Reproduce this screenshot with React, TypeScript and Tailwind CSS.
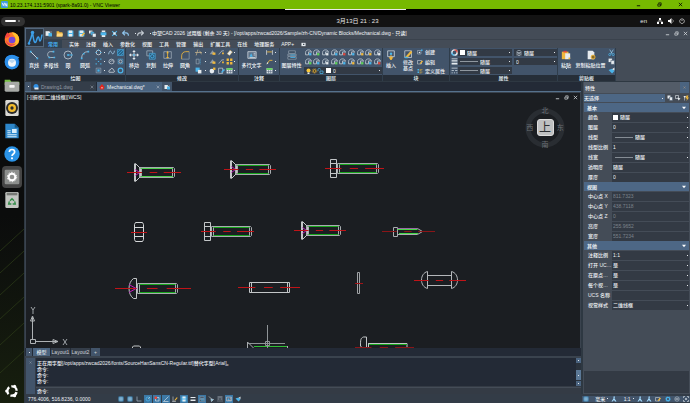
import React from 'react'
import type { ReactNode } from 'react'

const styles = {
  label: "whitespace-nowrap text-[5px] leading-[6px] font-medium text-[#f0f3f6]",
  combo:
    "w-full min-w-0 appearance-none bg-transparent text-[5px] leading-[6px] font-medium text-[#f0f3f6] outline-none",
  comboBox: "flex h-[7px] items-center gap-[2px] bg-[#323a45] px-[2px]",
  section:
    "flex h-[9px] w-full items-center justify-between bg-[#4d6785] px-[3px] text-[5px] leading-[6px] font-bold text-[#e8edf2]",
  winBtn: "flex h-[8px] w-[9px] items-center justify-center text-[#d5d9dd]",
};

const W = "#e6ebef";
const B = "#4bb4ea";
const Y = "#f0b83c";
const G = "#5fd05a";
const R = "#e0483e";

// every glyph is drawn on a 12 x 12 grid
const glyphs: Record<string, ReactNode> = {
  newDoc: <><path d="M1 2h10v8H1z" fill={W} /><path d="M6 5h6v6H6z" fill={B} /><path d="M7 2l4 4V2z" fill="#3d4652" /></>,
  open: <><path d="M1 2h4l1 2h5v7H1z" fill={Y} /><path d="M2 6h10l-1 5H1z" fill="#ffd680" /></>,
  save: <><path d="M1 1h10v10H1z" fill={B} /><path d="M3 1h6v4H3zM3 7h6v4H3z" fill={W} /></>,
  saveAs: <><path d="M1 1h10v10H1z" fill={B} /><path d="M3 1h6v4H3zM3 7h6v4H3z" fill={W} /><path d="M6 9l4-5 2 2-5 5z" fill={Y} /></>,
  copies: <><path d="M0 1h6v5H0z" fill={W} /><path d="M3 3h6v6H3z" fill={B} stroke="#3d4652" strokeWidth=".6" /><path d="M6 6h6v6H6z" fill={W} stroke="#3d4652" strokeWidth=".6" /></>,
  print: <><path d="M3 1h6v3H3zM3 8h6v4H3z" fill={W} /><path d="M1 4h10v5H1z" fill={B} /></>,
  plot: <><path d="M2 2l8 8M10 2l-8 8" stroke={B} strokeWidth="2" /><path d="M4 4h4v4H4z" fill={W} /></>,
  undo: <path d="M2 5h5c3 0 4 2 4 5M5 1L1 5l4 4" fill="none" stroke="#8ec3ea" strokeWidth="2" />,
  redo: <path d="M10 5H5c-3 0-4 2-4 5M7 1l4 4-4 4" fill="none" stroke="#c3cad1" strokeWidth="2" />,
  line: <><path d="M2 2l8 8" stroke={W} /><path d="M1 1h2v2H1zM9 9h2v2H9z" fill={B} /></>,
  pline: <><path d="M9 2H5C1 2 1 9 5 9h5" fill="none" stroke="#b9c4cf" /><path d="M8 1h2v2H8zM9 8h2v2H9zM3 8h2v2H3z" fill={B} /></>,
  circle: <><circle cx="6" cy="6" r="4.8" fill="none" stroke="#c8d1da" strokeWidth=".9" /><path d="M6 6h4" stroke={B} /><circle cx="6" cy="6" r="1.1" fill={B} /><circle cx="10.5" cy="6" r="1" fill={B} /></>,
  arc: <><path d="M2 10C2 5 5 2 10 2" fill="none" stroke="#c8d1da" /><path d="M1 9h2v2H1zM9 1h2v2H9zM3.500 3.500h2v2h-2z" fill={B} /></>,
  ellipse: <><circle cx="6" cy="6" r="4" fill="none" stroke={W} strokeWidth="1.200" /><path d="M1 5h2v2H1zM9 5h2v2H9zM5 1h2v2H5z" fill={B} /></>,
  spline: <path d="M1 9C3 1 5 3 6 6s4 4 5-3" fill="none" stroke="#9fc6e2" strokeWidth="1.500" />,
  hatch: <><path d="M1 1h10v10H1z" fill="#27648a" stroke={B} /><path d="M1 11L11 1M1 6l5-5M6 11l5-5" stroke={B} /></>,
  points: <path d="M1 1h2v2H1zM9 1h2v2H9zM5 5h2v2H5zM1 9h2v2H1zM9 9h2v2H9z" fill={B} />,
  helix: <><ellipse cx="6" cy="6" rx="4.500" ry="4" fill="none" stroke={W} /><path d="M2 8c3-4 6-4 8-2" fill="none" stroke={W} /></>,
  region: <><path d="M2 2h8v8H2z" fill="none" stroke={B} /><circle cx="6" cy="6" r="2.500" fill="none" stroke={W} /></>,
  rect: <><path d="M2 2h8v8H2z" fill="none" stroke="#9fb2c4" /><path d="M4 4h4v4H4z" fill={B} /></>,
  cloud: <path d="M2 9c-2-3 1-4 2-4 1-4 5-3 5 0 3 1 2 4 1 4z" fill="none" stroke={W} strokeWidth="1.200" />,
  donut: <circle cx="6" cy="6" r="4" fill="none" stroke={B} strokeWidth="2" />,
  move: <><path d="M6 1v10M1 6h10" stroke={W} /><path d="M6 0l2 2.500H4zM6 12l2-2.500H4zM0 6l2.500-2v4zM12 6L9.500 4v4z" fill={W} /><path d="M5 5h2v2H5z" fill={B} /></>,
  copy: <><path d="M1 1h7v6H1z" fill="none" stroke="#97a8b8" /><path d="M4 4h7v7H4z" fill="#2c5878" stroke={B} strokeWidth=".8" /><circle cx="7.500" cy="7.500" r="2" fill="none" stroke={B} /></>,
  stretch: <><path d="M1 2h9v8H1z" fill="none" stroke="#a9b5c1" strokeWidth=".8" /><path d="M5.500 3v7M4 9h3" stroke={Y} /><path d="M5.500 1l1.500 3H4z" fill={Y} /></>,
  fillet: <><path d="M2 11V7c0-3 2-5 5-5h4" fill="none" stroke={Y} /><path d="M2 11h9V2" fill="none" stroke="#9fb0c0" strokeWidth=".7" /></>,
  trim: <path d="M2 11l3-10M0 6h12M8 3l3 6" stroke="#cdb98f" strokeWidth="1.200" />,
  mirror: <><path d="M1 9h10L6 2z" fill="#8c98a5" /><path d="M6 6h5v4H6z" fill={Y} /></>,
  rotate: <><path d="M1 9c4-1 2-6 9-6" stroke={W} fill="none" /><path d="M7 6h3v3H7z" fill={Y} /></>,
  erase: <path d="M2 8l5-6 4 3-5 6z" fill={W} stroke={Y} strokeWidth=".6" />,
  offset: <><path d="M2 2h5v8H2z" fill="none" stroke="#a9b5c1" /><path d="M9 1v10" stroke={B} strokeDasharray="2 1" /></>,
  array: <path d="M1 1h4v4H1zM7 1h4v4H7zM1 7h4v4H1zM7 7h4v4H7z" fill={Y} />,
  scale: <><path d="M1 1h7v7H1z" fill={B} /><path d="M5 5h6v6H5z" fill={W} /></>,
  sphere: <><circle cx="5" cy="7" r="4" fill={W} /><path d="M7 1h4v4H7z" fill={Y} /></>,
  edit: <><path d="M1 2h7v9H1z" fill="none" stroke={W} /><path d="M5 9l5-6 2 2-5 5z" fill={B} /></>,
  mtext: <><path d="M1 2h10v8H1z" fill="#60748a" stroke={W} strokeWidth=".8" /><path d="M3 8l2-4 2 4z" fill={B} /><path d="M8 4h2M8 6h2M3 9h7" stroke={W} strokeWidth=".8" /></>,
  dim: <><path d="M1 2v8M11 2v8" stroke={W} strokeWidth="1.200" /><path d="M2 5h8" stroke={Y} strokeWidth="1.500" /></>,
  leader: <><path d="M2 10l4-6h5" stroke={Y} fill="none" strokeWidth="1.500" /><path d="M1 11l1-4 2 2z" fill={W} /></>,
  table: <><path d="M1 2h10v9H1z" fill={W} /><path d="M1 2h10v3H1z" fill={G} /><path d="M4.500 5v6M8 5v6M1 8h10" stroke="#47596e" /></>,
  layers: <><path d="M2 1h8v3H2zM1 5h10v2H1zM1 8h10v3H1z" fill="#35485c" stroke="#a8b5c2" strokeWidth=".7" /><path d="M4 6h6M4 9h6" stroke={B} /></>,
  insert: <><path d="M2 1h8v7H2z" fill="none" stroke="#c9d2da" /><circle cx="6" cy="4.500" r="1.500" fill={B} /><path d="M6 6v5M4 9l2 3 2-3z" stroke={Y} fill={Y} /></>,
  base: <><path d="M1 1h9v9H1z" fill="none" stroke="#c9d2da" /><path d="M2 9l7-8 2 2-7 8z" fill={Y} /><path d="M1 9h4v2H1z" fill={B} /></>,
  create: <><path d="M1 3h7v7H1z" fill="none" stroke="#b9c5d0" /><path d="M8 1h3v3H8z" fill={B} /><circle cx="5" cy="7" r="1.500" fill={W} /></>,
  editBlk: <><path d="M1 3h8v7H1z" fill="none" stroke={W} /><path d="M5 9l5-6 2 2-5 5z" fill={Y} /></>,
  attr: <><path d="M1 2h3v3H1zM1 7h3v3H1z" fill={B} /><path d="M5 3h6M5 5h4M5 8h6M5 10h4" stroke={Y} /></>,
  wheel: <><circle cx="6" cy="6" r="4.500" fill="none" stroke={W} strokeWidth="2.500" /><path d="M6 1.500A4.500 4.500 0 0 1 10.500 6" stroke={R} strokeWidth="2" fill="none" /><path d="M1.500 6A4.500 4.500 0 0 0 6 10.500" stroke={B} strokeWidth="2" fill="none" /></>,
  widths: <path d="M1 1h10v1H1zM1 4h10v2H1zM1 8h10v3H1z" fill={W} />,
  types: <path d="M1 2h10M1 6h4M7 6h4M1 10h2M5 10h2M9 10h2" stroke="#bcc7d1" strokeWidth="1.500" />,
  paste: <><path d="M1 2h8v9H1z" fill={Y} /><path d="M3 1h4v2H3z" fill={R} /><path d="M5 4h6v7H5z" fill={W} /><path d="M9 9h2v2H9z" fill={Y} /></>,
  pastePos: <><path d="M2 1h6l2 2v8H2z" fill={W} /><circle cx="8.500" cy="8.500" r="2.400" fill="#8a6a22" stroke={Y} /></>,
  cut: <><path d="M3 1l4 7M9 1L5 8" stroke="#9bd2f2" strokeWidth="1.200" /><circle cx="3" cy="9.500" r="1.800" fill="none" stroke={B} strokeWidth="1.300" /><circle cx="9" cy="9.500" r="1.800" fill="none" stroke={B} strokeWidth="1.300" /></>,
  clip: <><path d="M1 1h6v6H1z" fill={W} /><path d="M5 4h6v7H5z" fill={W} stroke="#42546a" /></>,
  brush: <><path d="M1 5l6-2 4 4-4 4z" fill={B} /><path d="M7 4l4-3v5z" fill={W} /></>,
  play: <><path d="M1 2h10v8H1z" fill={W} /><path d="M5 4h3v3H5z" fill="#323a45" /></>,
  grid: <><path d="M1 1h10v10H1z" fill="#2f7fb4" /><path d="M4.300 1v10M7.700 1v10M1 4.300h10M1 7.700h10" stroke={W} strokeWidth=".8" /></>,
  ortho: <path d="M2 1v9h9" stroke="#9fb0c0" fill="none" strokeWidth="1.500" />,
  polar: <><circle cx="6" cy="6" r="4" fill="none" stroke={B} strokeWidth="1.500" /><path d="M6 6l4-4" stroke={W} /></>,
  osnap: <><path d="M3 3h7v7H3z" fill="none" stroke={W} strokeWidth="1.200" /><path d="M1 1h5v5H1z" fill={R} /></>,
  track: <path d="M1 11L11 1M1 11h10" stroke={W} strokeWidth="1.200" />,
  dyn: <><path d="M1 10h6v1H1zM2 1v8" stroke={W} /><path d="M5 8l5-6 1 2-4 5z" fill={Y} /></>,
  lweight: <path d="M1 2h10v2H1zM1 7h10v3H1z" fill={W} />,
  cursor: <path d="M2 1l5 5M6 6l5 1-4 4z" stroke={W} fill={B} strokeWidth="1.200" />,
  figure: <path d="M5 1h3l-1 4 4 6H8L6 8l-3 3H1l4-6z" fill="#a5dcff" />,
  gear: <><circle cx="6" cy="6" r="3.500" fill="none" stroke={B} strokeWidth="2.500" /><circle cx="6" cy="6" r="5.300" fill="none" stroke={B} strokeDasharray="1.500 1.800" /></>,
  lock: <><circle cx="6" cy="6" r="4.500" fill="none" stroke="#ccd4db" /><path d="M3 5h6M3 7h6" stroke="#ccd4db" /></>,
  full: <path d="M1 4V1h3M8 1h3v3M11 8v3H8M4 11H1V8M4 4l4 4M8 4L4 8" fill="none" stroke={W} strokeWidth="1.200" />,
  select: <><path d="M1 1h6v6H1z" fill="none" stroke={W} strokeWidth="1.200" /><path d="M5 5l6 2-4 4z" fill={W} /></>,
  filter: <><path d="M1 2h5l-2 4v5H3V6z" fill={W} /><path d="M7 1L5 7h3l-1 5 5-7H9l2-4z" fill={Y} /></>,
  printer: <path d="M2 11V3c0-3 8-3 8 0v8M2 5h8M4 7h4v4H4z" fill="none" stroke="#b6c1cb" strokeWidth="1.300" />,
  min: <path d="M2 9h8" stroke="currentColor" strokeWidth="2" />,
  restore: <><path d="M2 5h6v5H2z" fill="none" stroke="currentColor" strokeWidth="1.600" /><path d="M4 4V2h6v6H8" fill="none" stroke="currentColor" strokeWidth="1.600" /></>,
  close: <path d="M2 2l8 8M10 2l-8 8" stroke="currentColor" strokeWidth="1.800" />,
};

const Glyph = ({ name, className = "size-[6px]" }: { name: string; className?: string }) => (
  <svg viewBox="0 0 12 12" className={`shrink-0 ${className}`} aria-hidden="true">{glyphs[name]}</svg>
);

const Dot = () => <span className="size-px shrink-0 bg-[#e4e8ec]" />;

const layerTints = [B, G, W, B, R, B, Y, Y, W, G, B, W, G, B, Y, G, B, R];

const LayerIcon = ({ tint }: { tint: string }) => (
  <svg viewBox="0 0 12 12" className="size-[7px]" aria-hidden="true">
    <path d="M1 6c0-6 10-6 10 0M1 6v4h5V5h5" fill="none" stroke="#b6c1cb" strokeWidth="1.600" />
    <path d="M7 7h4v4H7z" fill={tint} />
  </svg>
);

const BigTool = ({ icon, label, more = true, className = "w-[16px]" }: { icon: string; label: string; more?: boolean; className?: string }) => (
  <button type="button" className={`flex shrink-0 flex-col items-center pt-[2px] ${className}`}>
    <Glyph name={icon} className="size-[10px]" />
    <span className={`mt-[2px] ${styles.label}`}>{label}</span>
    {more && <Dot />}
  </button>
);

const ToolGrid = ({ rows, className }: { rows: string[][]; className: string }) => (
  <div className={`grid content-between items-center justify-items-center py-[1px] ${className}`}>
    {rows.flat().map((name, i) =>
      name === "." ? <Dot key={i} /> : (
        <button type="button" key={i} aria-label={name}><Glyph name={name} className="block size-[7px]" /></button>
      )
    )}
  </div>
);

const Panel = ({ title, className, children }: { title: string; className: string; children: ReactNode }) => (
  <section className={`flex shrink-0 flex-col border-r border-[#2f3d4b] bg-[#42546a] ${className}`}>
    <div className="flex h-[27px] gap-px">{children}</div>
    <h2 className="flex h-[6px] items-center justify-center bg-[#262e38] text-[5px] leading-[6px] font-bold text-[#dde2e7]">{title}</h2>
  </section>
);

const Combo = ({ label, value, line, swatch, className = "" }: { label: string; value: string; line?: boolean; swatch?: boolean; className?: string }) => (
  <div className={`${styles.comboBox} ${className}`}>
    {swatch && <span className="size-[5px] shrink-0 bg-white" />}
    {line && <span className="h-px w-[18px] shrink-0 bg-[#8f979f]" />}
    <select className={styles.combo} aria-label={label}><option>{value}</option></select>
    <Dot />
  </div>
);

const Ribbon = () => (
  <div className="flex h-[33px] overflow-hidden bg-[#444c57] pl-px">
    <Panel title="绘图" className="w-[100px]">
      <BigTool icon="line" label="直线" />
      <BigTool icon="pline" label="多段线" />
      <BigTool icon="circle" label="圆" />
      <BigTool icon="arc" label="圆弧" />
      <ToolGrid className="flex-1 grid-cols-[8px_4px_10px_8px]" rows={[["ellipse", ".", "spline", "hatch"], ["points", ".", "helix", "region"], ["rect", ".", "cloud", "donut"]]} />
    </Panel>
    <Panel title="修改" className="w-[113px]">
      <BigTool icon="move" label="移动" />
      <BigTool icon="copy" label="复制" />
      <BigTool icon="stretch" label="拉伸" />
      <BigTool icon="fillet" label="圆角" />
      <ToolGrid className="flex-1 grid-cols-[9px_4px_10px_8px_8px_3px]" rows={[["trim", ".", "mirror", "rotate", "erase", "."], ["offset", ".", "mirror", "rotate", "array", "."], ["scale", ".", "sphere", "edit", "table", "."]]} />
    </Panel>
    <Panel title="注释" className="w-[41px]">
      <BigTool icon="mtext" label="多行文字" className="w-[25px]" />
      <ToolGrid className="flex-1 grid-cols-[9px_3px]" rows={[["dim", "."], ["leader", "."], ["table", "."]]} />
    </Panel>
    <Panel title="图层" className="w-[103px]">
      <BigTool icon="layers" label="图层特性" more={false} className="w-[23px]" />
      <div className="flex flex-1 flex-col gap-[2px] pt-[1px]">
        <div className="grid grid-cols-9 justify-items-center gap-y-[2px]">
          {layerTints.map((tint, i) => <button type="button" key={i} aria-label={`layer ${i + 1}`}><LayerIcon tint={tint} /></button>)}
        </div>
        <div className={styles.comboBox}>
          <svg viewBox="0 0 36 12" className="h-[6px] w-[18px] shrink-0" aria-hidden="true">
            <circle cx="5" cy="5" r="4" fill="#f8c83a" /><path d="M3 9h4v3H3z" fill={W} />
            <circle cx="17" cy="6" r="3" fill="#594a22" stroke={Y} strokeWidth="1.500" /><circle cx="17" cy="6" r="5" fill="none" stroke={Y} strokeDasharray="1.500 2" />
            <path d="M24 6V3c0-3 5-3 5 0M28 6h6v5h-6z" fill="none" stroke={B} strokeWidth="1.500" />
          </svg>
          <span className="size-[5px] shrink-0 bg-white" />
          <select className={styles.combo} aria-label="图层"><option>0</option></select>
          <Dot />
        </div>
      </div>
    </Panel>
    <Panel title="块" className="w-[67px]">
      <BigTool icon="insert" label="插入" more={false} />
      <button type="button" className="flex w-[16px] shrink-0 flex-col items-center pt-[2px]">
        <Glyph name="base" className="size-[9px]" />
        <span className={styles.label}>修改<br />基点</span>
      </button>
      <div className="flex flex-1 flex-col justify-between py-[1px]">
        {[["create", "创建"], ["editBlk", "编辑"], ["attr", "定义属性"]].map(([icon, label]) => (
          <button type="button" key={label} className="flex items-center gap-[2px]"><Glyph name={icon} /><span className={styles.label}>{label}</span></button>
        ))}
      </div>
    </Panel>
    <Panel title="属性" className="w-[108px]">
      <ToolGrid className="w-[7px] pl-px" rows={[["wheel"], ["widths"], ["types"]]} />
      <div className="flex w-[54px] flex-col justify-between py-px">
        <Combo label="颜色" value="随层" swatch />
        <Combo label="线宽" value="随层" line />
        <Combo label="线型" value="随层" line />
      </div>
      <div className="flex flex-1 flex-col gap-[2px] py-px pl-px">
        <div className={styles.comboBox}>
          <Glyph name="printer" />
          <select className={styles.combo} aria-label="打印样式"><option>随层</option></select>
          <Dot />
        </div>
        <Combo label="透明度" value="0" />
      </div>
    </Panel>
    <Panel title="剪贴板" className="w-[58px]">
      <BigTool icon="paste" label="粘贴" />
      <BigTool icon="pastePos" label="复制粘贴位置" more={false} className="w-[31px]" />
      <ToolGrid className="flex-1" rows={[["cut"], ["clip"], ["brush"]]} />
    </Panel>
  </div>
);

const menus = ["实体", "注释", "插入", "参数化", "视图", "工具", "管理", "输出", "扩展工具", "在线", "地理服务", "APP+"];
const quick = ["newDoc", "open", "save", "saveAs", "copies", "print", "plot", "undo", ".", "redo", "."];

const AppHeader = () => (
  <header className="flex h-[21px] bg-[#444c57]">
    <button type="button" aria-label="ZWCAD" className="my-px flex w-[19px] shrink-0 items-center justify-center border border-[#53677d] bg-[#2a3440]">
      <svg viewBox="0 0 32 32" className="size-[16px]" aria-hidden="true">
        <path d="M3 28C6 22 9 14 11 5c2 11 2 18 5 20 3 1 4-12 7-11 2 1 1 8 3 8s3-7 4-13" fill="none" stroke="#3d9fe8" strokeWidth="3" />
        <circle cx="11" cy="5" r="3.500" fill="#3d9fe8" /><circle cx="4" cy="27" r="2.500" fill="#3d9fe8" />
      </svg>
    </button>
    <div className="flex min-w-0 flex-1 flex-col">
      <div className="flex h-[12px] items-center pl-px">
        {quick.map((name, i) =>
          name === "." ? <span key={i} className="flex w-[4px] shrink-0 justify-center"><Dot /></span> : (
            <button type="button" key={i} aria-label={name} className="flex w-[11px] shrink-0 justify-start"><Glyph name={name} className="size-[7px]" /></button>
          )
        )}
        <h1 className={`flex-1 overflow-hidden ${styles.label}`}>中望CAD 2026 试用版 (剩余 30 天) - [/opt/apps/zwcad2026/Sample/zh-CN/Dynamic Blocks/Mechanical.dwg - 只读]</h1>
        <WindowButtons />
      </div>
      <nav className="flex h-[9px] items-center gap-[7px] border-t border-[#3a424c]">
        <button type="button" className="h-full bg-[#33414f] px-[4px] text-[5px] leading-[6px] font-bold text-[#45aef0]">常用</button>
        {menus.map((m) => <button type="button" key={m} className={styles.label}>{m}</button>)}
        <Glyph name="play" className="size-[5px]" />
      </nav>
    </div>
  </header>
);

const WindowButtons = () => (
  <div className="flex shrink-0">
    {["min", "restore", "close"].map((n) => (
      <button type="button" key={n} aria-label={n} className={styles.winBtn}><Glyph name={n} className="size-[5px]" /></button>
    ))}
  </div>
);

// dashed axis: solid at both ends, short dash in the middle
const Axis = ({ x1, x2, y, dim }: { x1: number; x2: number; y: number; dim?: boolean }) => {
  const w = x2 - x1;
  return <path d={`M${x1} ${y}h${w * 0.28}m${w * 0.14} 0h${w * 0.14}m${w * 0.12} 0H${x2}`} stroke={dim ? "#8a1518" : "#c01418"} />;
};

const Shaft = ({ x, y, w, h = 10, green = "#17a51c" }: { x: number; y: number; w: number; h?: number; green?: string }) => (
  <>
    <path d={`M${x} ${y}h${w - 1}l1 1v${h - 2}l-1 1h${1 - w}zM${x + 2} ${y}v${h}M${x + w - 2} ${y}v${h}`} stroke="#a9adb0" />
    <path d={`M${x + 2} ${y + 1}h${w - 4}M${x + 2} ${y + h - 1}h${w - 4}`} stroke={green} />
  </>
);

const Countersunk = ({ x, y, w }: { x: number; y: number; w: number }) => (
  <>
    <Shaft x={x + 5} y={y - 5} w={w} />
    <path d={`M${x} ${y - 9}v18M${x + 1} ${y - 9}l5 5v8l-5 5z`} stroke="#c3c6c8" />
    <path d={`M${x + 1} ${y - 3}l4 3l-4 3M${x + 1} ${y}h5`} stroke="#c01ac0" />
  </>
);

const Hex = ({ x, y, w }: { x: number; y: number; w: number }) => (
  <>
    <Shaft x={x + 7} y={y - 5} w={w} />
    <path d={`M${x} ${y - 9}h6v18h-6zM${x} ${y - 5}h6M${x} ${y + 5}h6`} stroke="#c3c6c8" />
  </>
);

const Drawing = () => (
  <svg className="absolute inset-0 h-full w-full" fill="none" strokeWidth="1" role="img" aria-label="Mechanical.dwg">
    <g transform="translate(-26 -93)">
      <Countersunk x={134.5} y={172.5} w={35} />
      <path d="M141 168.500h32M141 176.500h32" stroke="#4ed24e" />
      <Axis x1={127} x2={181} y={172.5} />
      <Countersunk x={230.5} y={169.5} w={35} />
      <Axis x1={224} x2={276} y={169.5} />
      <Hex x={330.5} y={168.5} w={41} />
      <Axis x1={325} x2={384} y={168.5} />
      <path d="M135.500 222.500h7l1 2v15l-1 2h-7l-1-2v-15zM135 227.500h8M135 236.500h8" stroke="#d5d7d9" />
      <path d="M131 232.500h16" stroke="#c01418" />
      <Hex x={204.5} y={231.5} w={40} />
      <Axis x1={201} x2={254} y={231.5} />
      <Countersunk x={301.5} y={230.5} w={34} />
      <Axis x1={294} x2={346} y={230.5} />
      <path d="M393.500 227.500h4v9h-4zM397.500 234.500h20l5-3l-5-3h-20" stroke="#a9adb0" />
      <path d="M397.500 228.500h20" stroke="#9a6aa5" />
      <path d="M397.500 229.500h20M399 233.500h19" stroke="#45d845" />
      <Axis x1={382} x2={435} y={231.5} dim />
      <Shaft x={137.5} y={283.5} w={40} />
      <path d="M136.500 278.500v20h-3c-6-4-6-16 0-20z" stroke="#c3c6c8" />
      <path d="M129 284.500l7 4l-7 4M129 288.500h8" stroke="#c01ac0" />
      <Axis x1={115} x2={191} y={288.5} />
      <path d="M249.500 282.500h40v10h-40zM251.500 282.500v10M287.500 282.500v10" stroke="#c3c6c8" />
      <Axis x1={238} x2={300} y={287.5} />
      <path d="M357.500 272.500h2v21h-2z" stroke="#a0a3a6" />
      <path d="M355 283.500h8" stroke="#a01418" />
      <path d="M427.500 271.500v17c-8-2-8-15 0-17zM451.500 271.500v17c8-2 8-15 0-17zM427.500 275.500h24M427.500 285.500h24" stroke="#b4b7ba" />
      <Axis x1={414} x2={466} y={280.5} />
      <path d="M132.500 349v-2l1-1h6l1 1v2" stroke="#c3c6c8" />
      <path d="M247.500 349v-7l7 7M287.500 349v-3" stroke="#a9adb0" />
      <path d="M254 346.500h33" stroke="#2fbf35" />
      <path d="M267.500 325v24M248 343.500h37M265.500 341.500h4v4h-4z" stroke="#8f9497" />
      <path d="M366.500 349v-12h-3c-3 1-3 3-3 9l3 3M368 343.500h39v6M368.500 343v6" stroke="#c3c6c8" />
      <path d="M369 344.500h38" stroke="#17a51c" />
      <Axis x1={355} x2={414} y={347.5} dim />
      <path d="M30.500 339.500h5v4h-5zM32.500 339v-22M30.500 321l2-5l2 5zM35 341.500h23M53 339.500l5 2l-5 2z" stroke="#aeb2b5" />
      <path d="M31 307l2 3v4M35 307l-2 3M63 339l4 6M67 339l-4 6" stroke="#9da2a6" />
    </g>
  </svg>
);

const Compass = () => (
  <div className="absolute top-[12px] right-[12px] grid size-[46px] grid-cols-3 place-items-center text-[7px] leading-[8px] text-[#6b7075]">
    <svg viewBox="0 0 46 46" className="absolute inset-0" aria-hidden="true"><circle cx="23" cy="23" r="17" fill="none" stroke="#292d32" strokeWidth="5" /></svg>
    <span className="relative col-start-2">北</span>
    <span className="relative col-start-1">西</span>
    <button type="button" className="relative flex size-[17px] items-center justify-center rounded-[3px] border border-[#dcdcdc] bg-[#bfc0c1] text-[12px] leading-[12px] text-[#2c2f33]">上</button>
    <span className="relative">东</span>
    <span className="relative col-start-2">南</span>
  </div>
);

const Workspace = () => (
  <div className="flex min-w-0 flex-1 flex-col bg-[#3a434e]">
    <div className="flex h-[10px] items-stretch border-b border-[#55718c] bg-[#232a36]" role="tablist">
      <button type="button" aria-label="列表" className="flex w-[6px] items-center justify-center bg-[#42546a]"><Dot /></button>
      <button type="button" role="tab" className="flex w-[66px] items-center gap-[2px] border-r border-[#232a36] bg-[#343d49] px-[2px] text-[5px] leading-[6px] text-[#929ba4]">
        <svg viewBox="0 0 12 12" className="size-[6px]" aria-hidden="true"><circle cx="6" cy="5" r="5" fill="#2f8fe4" /><path d="M3 7h8v4H3z" fill={W} /></svg>
        <span className="flex-1 text-left">Drawing1.dwg</span><Glyph name="close" className="size-[4px]" />
      </button>
      <button type="button" role="tab" aria-selected="true" className="flex w-[65px] items-center gap-[2px] bg-[#4b6480] px-[2px] text-[5px] leading-[6px] text-[#eef2f5]">
        <svg viewBox="0 0 12 12" className="size-[6px]" aria-hidden="true"><path d="M6 0l5 6-2 5H3L1 6z" fill="#e3251b" /><path d="M5 6h2v3H5z" fill={W} /></svg>
        <span className="flex-1 text-left whitespace-nowrap">Mechanical.dwg*</span><Glyph name="close" className="size-[4px] text-[#aeb9c4]" />
      </button>
      <button type="button" aria-label="新建" className="flex w-[10px] items-center justify-center bg-[#42546a]"><Glyph name="newDoc" /></button>
    </div>
    <main className="relative mx-px mt-px flex-1 overflow-hidden bg-[#1b1e22]">
      <Drawing />
      <p className="relative px-px py-px text-[5px] leading-[6px] font-medium text-[#eceef0]">[-][俯视][二维线框][WCS]</p>
      <div className="absolute top-0 right-0"><WindowButtons /></div>
      <Compass />
    </main>
    <div className="flex h-[8px] gap-px bg-[#232a36] pl-px text-[5px] leading-[6px] text-[#ccd2d8]">
      <button type="button" aria-label="上一个" className="flex w-[6px] items-center justify-center bg-[#42546a]"><Dot /></button>
      <button type="button" className="w-[17px] bg-[#4b6480] text-white">模型</button>
      <button type="button" className="w-[19px] bg-[#343d49]">Layout1</button>
      <button type="button" className="w-[19px] bg-[#343d49]">Layout2</button>
      <button type="button" className="w-[9px] bg-[#42546a]">+</button>
    </div>
    <div className="mt-[2px] flex h-[36px] bg-[#343b45]">
      <div className="ml-px flex w-[9px] justify-center bg-[#42546a] pt-[3px] text-[#9aa6b2]"><Glyph name="close" className="size-[3px]" /></div>
      <div className="flex min-w-0 flex-1 flex-col pl-px">
        <div className="flex h-[28px] bg-[#232a36]">
          <div className={`flex-1 pt-[2px] pl-px ${styles.label}`}>
            <p>正在用字型[/opt/apps/zwcad2026/fonts/SourceHanSansCN-Regular.ttf]替代字型[Arial]。</p>
            <p>命令:</p><p>命令:</p><p>命令:</p>
          </div>
          <div className="flex w-[5px] flex-col justify-between bg-[#2b333d]">
            <span className="flex h-[5px] items-center justify-center bg-[#4b6480]"><Dot /></span>
            <span className="mt-[6px] flex h-[10px] items-center justify-center bg-[#5b7896]"><Dot /></span>
            <span className="flex h-[5px] items-center justify-center bg-[#4b6480]"><Dot /></span>
          </div>
        </div>
        <label className={`mt-px flex h-[7px] items-center border-t border-[#444c57] pl-px ${styles.label}`}>
          命令:<input type="text" className="min-w-0 flex-1 bg-transparent outline-none" />
        </label>
      </div>
    </div>
  </div>
);

interface Prop {
  name: string;
  value: string;
  kind?: string;
}

const groups: { title: string; props: Prop[] }[] = [
  { title: "基本", props: [
    { name: "颜色", value: "随层", kind: "swatch" },
    { name: "图层", value: "0", kind: "select" },
    { name: "线型", value: "随层", kind: "line" },
    { name: "线型比例", value: "1" },
    { name: "线宽", value: "随层", kind: "line" },
    { name: "透明度", value: "随层" },
    { name: "厚度", value: "0" },
  ] },
  { title: "视图", props: [
    { name: "中心点 X", value: "811.7323", kind: "off" },
    { name: "中心点 Y", value: "438.7118", kind: "off" },
    { name: "中心点 Z", value: "0", kind: "off" },
    { name: "高度", value: "255.9652", kind: "off" },
    { name: "宽度", value: "551.7234", kind: "off" },
  ] },
  { title: "其他", props: [
    { name: "注释比例", value: "1:1", kind: "select" },
    { name: "打开 UC…", value: "是", kind: "select" },
    { name: "在原点…", value: "是", kind: "select" },
    { name: "每个视…", value: "是", kind: "select" },
    { name: "UCS 名称", value: "" },
    { name: "视觉样式", value: "二维线框", kind: "select" },
  ] },
];

const PropRow = ({ name, value, kind }: Prop) => {
  const isInput = !kind || kind === "off";
  return (
    <div className="flex h-[10px] items-center">
      <label htmlFor={name} className={`w-[28px] shrink-0 overflow-hidden pl-[4px] ${styles.label}`}>{name}</label>
      <div className="flex h-[9px] min-w-0 flex-1 items-center gap-[2px] bg-[#333a44] px-px">
        {kind === "swatch" && <span className="size-[5px] shrink-0 bg-white" />}
        {kind === "line" && <span className="ml-[2px] h-px w-[18px] shrink-0 bg-[#858c94]" />}
        {isInput ? (
          <input id={name} type="text" defaultValue={value} disabled={kind === "off"} className={`${styles.combo} disabled:text-[#7c838b]`} />
        ) : (
          <>
            <select id={name} className={styles.combo}><option>{value}</option></select>
            <Dot />
          </>
        )}
      </div>
    </div>
  );
};

const PropertiesPanel = () => (
  <aside className="flex w-[109px] shrink-0 flex-col border-l-2 border-[#2e3842] bg-[#444c57] px-px pb-px">
    <div className="flex h-[11px] items-center justify-between bg-[#535c68] pl-px">
      <h2 className={styles.label}>特性</h2>
      <button type="button" aria-label="关闭" className="flex h-full w-[9px] items-center justify-center bg-[#4b6480] text-[#b59c86]"><Glyph name="close" className="size-[3px]" /></button>
    </div>
    <div className="my-px flex h-[8px] items-center gap-[2px]">
      <div className="flex h-full min-w-0 flex-1 items-center bg-[#4d6785] pr-[2px]">
        <select className={styles.combo} aria-label="选择"><option>无选择</option></select><Dot />
      </div>
      <button type="button" aria-label="快速选择"><Glyph name="clip" /></button>
      <button type="button" aria-label="选择对象"><Glyph name="select" /></button>
      <button type="button" aria-label="过滤"><Glyph name="filter" /></button>
    </div>
    {groups.map((g) => (
      <div key={g.title}>
        <button type="button" className={styles.section}>
          {g.title}
          <svg viewBox="0 0 6 6" className="size-[4px]" aria-hidden="true"><path d="M0 1h6L3 5z" fill="#fff" /></svg>
        </button>
        {g.props.map((p) => <PropRow key={p.name} {...p} />)}
      </div>
    ))}
    <div className="mt-auto h-[22px] bg-[#333a44]" />
  </aside>
);

const toggles = ["grid", "grid", "ortho", "polar", "osnap", "track", "dyn", "save", "lweight", "layers", "cursor", "types", "mtext", "brush"];
const lit = [3, 4, 5, 7, 9, 12];

const StatusBar = () => (
  <footer className="flex h-[9px] items-center bg-[#333c47] pl-[3px]">
    <output className={`w-[89px] ${styles.label}`}>776.4006, 516.8236, 0.0000</output>
    <div className="flex flex-1 gap-px">
      {toggles.map((name, i) => (
        <button type="button" key={i} aria-label={`${name} ${i}`} className={`flex size-[8px] items-center justify-center ${lit.includes(i) ? "bg-[#3c78a5]" : ""}`}><Glyph name={name} /></button>
      ))}
    </div>
    <div className="flex w-[108px] items-center justify-between bg-[#42546a] px-px">
      <Glyph name="grid" />
      <button type="button" className={`ml-[3px] flex items-center gap-[2px] ${styles.label}`}>毫米 <Dot /></button>
      <Glyph name="figure" />
      <button type="button" className={`ml-[3px] flex items-center gap-[2px] ${styles.label}`}>1:1 <Dot /></button>
      {["figure", "figure", "editBlk", "gear", "lock", "full"].map((n, i) => (
        <button type="button" key={i} aria-label={`${n} ${i}`}><Glyph name={n} /></button>
      ))}
    </div>
  </footer>
);

const dock: { name: string; on?: boolean; art: ReactNode }[] = [
  { name: "Firefox", art: <><circle cx="12" cy="13" r="11" fill="#ff7a2a" /><path d="M12 2c8 1 12 7 10 14-3 8-14 9-18 4 8 3 15-2 13-9-1-4-4-5-5-9z" fill="#ffc22e" /><path d="M1 11c1-5 3-7 4-9 1 2 3 3 5 4L7 9z" fill="#f5443f" /><circle cx="12" cy="13.500" r="5" fill="#7447d8" /><path d="M3 14c3 6 9 8 15 4-3 6-14 7-15-4z" fill="#ef3a52" /></> },
  { name: "Thunderbird", art: <><circle cx="12" cy="12" r="11" fill="#1a73d0" /><path d="M2 7C4 1 13 0 18 3l5 2-3 3c4 7 0 14-7 15C4 23-1 15 2 7z" fill="#2c8fea" /><circle cx="12" cy="13" r="6" fill="#f2f6fa" /><path d="M7 10c2-2 7-3 10 0l-5 4z" fill="#b9d6f0" /></> },
  { name: "Files", art: <><path d="M1 4h8l2 3h12v5H1z" fill="#77c244" /><rect x="1" y="7" width="22" height="15" rx="2" fill="#a7aaa6" /><rect x="8" y="12" width="8" height="4" rx="1" fill="#f4f4f4" /></> },
  { name: "Rhythmbox", art: <><rect x="2" y="0" width="20" height="24" rx="2" fill="#dad9d3" /><circle cx="12" cy="12" r="9" fill="#2b2b2b" /><circle cx="12" cy="12" r="6" fill="#f3bc2c" /><circle cx="12" cy="12" r="2.500" fill="#2b2b2b" /></> },
  { name: "Writer", art: <><path d="M2 1h14l6 6v16H2z" fill="#2d86c9" /><path d="M16 1l6 6h-6z" fill="#16537f" /><path d="M5 11h5v1.500H5zM5 14h5v1.500H5zM5 17h14v1.500H5zM5 20h14v1.500H5zM12 9h7v6h-7z" fill="#d8edfa" /></> },
  { name: "Help", art: <><circle cx="12" cy="12" r="11.500" fill="#2b93e6" /><path d="M8 9c0-5 8-5 8 0 0 3-4 3-4 6" fill="none" stroke="#fff" strokeWidth="2.500" /><circle cx="12" cy="18.500" r="1.600" fill="#fff" /></> },
  { name: "Settings", on: true, art: <><rect x="1" y="1" width="22" height="22" rx="2" fill="#8d8f8d" /><circle cx="12" cy="12" r="5" fill="none" stroke="#fff" strokeWidth="3" /><circle cx="12" cy="12" r="7" fill="none" stroke="#fff" strokeWidth="1.500" strokeDasharray="2.200 2.200" /></> },
  { name: "Trash", art: <><rect x="2" y="0" width="20" height="24" rx="2" fill="#c4c6c2" /><rect x="4" y="1" width="16" height="4" fill="#777975" /><path d="M9 13l3-3 3 3M16 14l1 4h-4M8 14l-1 4h4" fill="none" stroke="#2f8b45" strokeWidth="2" /></> },
];

const Dock = () => (
  <aside className="relative flex w-[24px] shrink-0 flex-col items-center bg-linear-to-b from-[#0b0c0c] from-50% to-[#171f0e] pt-px">
    <svg className="absolute inset-x-0 bottom-0 h-[190px] w-full" viewBox="0 0 24 190" preserveAspectRatio="none" aria-hidden="true">
      <path d="M0 38L24 16M0 60L24 38M0 82L24 60M0 106L24 84M0 132L24 110M0 160L24 138" stroke="#2b3818" strokeWidth=".8" />
    </svg>
    {dock.map((d) => (
      <button type="button" key={d.name} aria-label={d.name} className={`relative mb-px flex h-[22px] w-[20px] items-center justify-center rounded-[4px] ${d.on ? "bg-[#454545]" : ""}`}>
        <svg viewBox="0 0 24 24" className="size-[16px]">{d.art}</svg>
      </button>
    ))}
    <button type="button" aria-label="Show Apps" className="relative mt-auto mb-[5px]">
      <svg viewBox="0 0 24 24" className="size-[14px]">
        <circle cx="12" cy="12" r="8" fill="none" stroke="#fff" strokeWidth="4" strokeDasharray="13 3.755" strokeDashoffset="-2" />
        <circle cx="2.800" cy="12" r="2.600" fill="#fff" /><circle cx="16.500" cy="4" r="2.600" fill="#fff" /><circle cx="16.500" cy="20" r="2.600" fill="#fff" />
      </svg>
    </button>
  </aside>
);

const App = () => {
  return (
    <div className="flex min-h-screen flex-col bg-black font-['Liberation_Sans','Noto_Sans_CJK_SC',sans-serif]">
      <div className="flex h-[9px] items-center bg-[#76b900] px-px text-black">
        <svg viewBox="0 0 12 12" className="size-[7px]" aria-hidden="true"><rect width="12" height="12" rx="2" fill="#3f9be0" /><path d="M2 3l2 5 2-5M7 9V4l3 5V4" stroke="#fff" fill="none" strokeWidth="1.400" /></svg>
        <span className="flex-1 pl-[2px] text-[5px] leading-[6px] whitespace-nowrap">10.23.174.131:5901 (spark-8a91.0) - VNC Viewer</span>
        <div className="flex gap-[12px] pr-[4px]">
          {["min", "restore", "close"].map((n) => <button type="button" key={n} aria-label={n} className="flex w-[9px] justify-center"><Glyph name={n} className="size-[5px]" /></button>)}
        </div>
      </div>
      <div className="flex h-[6px] justify-center"><span className="h-px w-[121px] bg-[#e8e8e8]" /></div>
      <div className="grid h-[12px] grid-cols-3 items-center bg-[#131313] text-[6px] leading-[7px] text-[#e6e6e6]">
        <button type="button" aria-label="Activities" className="ml-px flex h-[9px] w-[24px] items-center gap-[2px] rounded-full bg-[#333] pl-[4px]">
          <span className="h-[2px] w-[11px] rounded-full bg-white" /><span className="size-[2px] rounded-full bg-[#8a8a8a]" />
        </button>
        <time className="pl-[25px] text-center whitespace-nowrap">3月13日 21 : 23</time>
        <div className="flex items-center justify-end gap-[5px] pr-[5px]">
          <span className="pr-[5px]">en</span>
          <svg viewBox="0 0 12 12" className="size-[6px]" aria-hidden="true"><path d="M4 0h4v4H4zM0 8h4v4H0zM8 8h4v4H8z" fill="#fff" /><path d="M6 4v3M2 8V6h8v2" stroke="#fff" fill="none" /></svg>
          <svg viewBox="0 0 12 12" className="size-[6px]" aria-hidden="true"><path d="M0 4h3l4-4v12L3 8H0z" fill="#fff" /><path d="M9 3c2 2 2 4 0 6" stroke="#bbb" fill="none" strokeWidth="1.500" /></svg>
          <svg viewBox="0 0 12 12" className="size-[6px]" aria-hidden="true"><path d="M4 2c-5 3-2 9 2 9s7-6 2-9M6 0v6" stroke="#ddd" fill="none" strokeWidth="1.500" /></svg>
        </div>
      </div>
      <div className="flex flex-1">
        <Dock />
        <div className="flex min-w-0 flex-1 flex-col border-l border-[#2e3842]">
          <AppHeader />
          <Ribbon />
          <div className="flex flex-1 border-t border-[#2e3842]">
            <Workspace />
            <PropertiesPanel />
          </div>
          <StatusBar />
        </div>
      </div>
    </div>
  )
}

export default App
